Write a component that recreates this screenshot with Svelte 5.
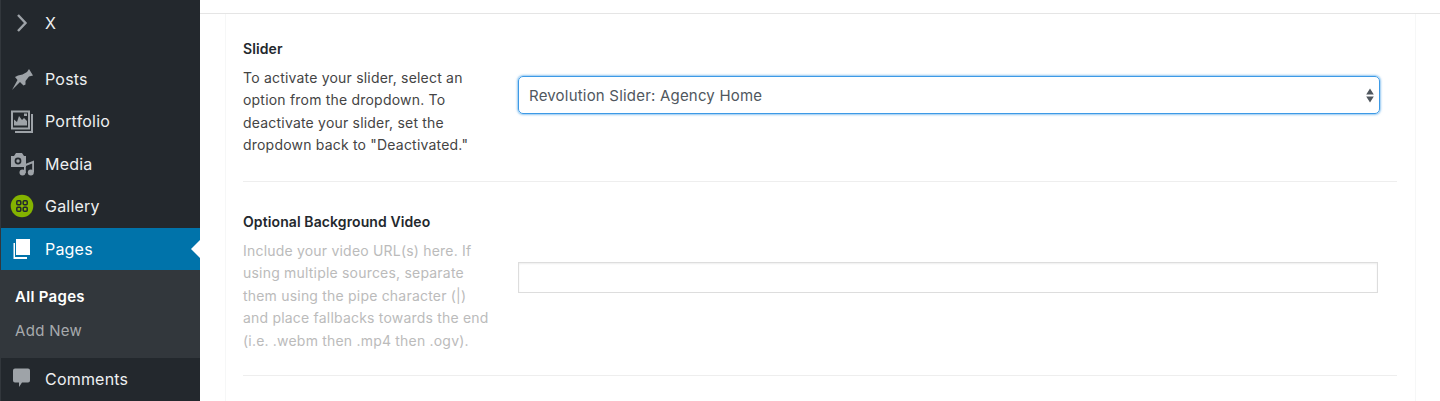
<script>
  const subs = [{ t: 'All Pages', cur: true }, { t: 'Add New', cur: false }];
</script>

<div class="page">
  <nav class="side">
    <div class="item first">
      <span class="ic"><svg width="22" height="22" viewBox="0 0 22 22"><path d="M8 3 L15.500 11 L8 19" fill="none" stroke="#9ea3a8" stroke-width="2.400"/></svg></span>
      <span class="lbl">X</span>
    </div>
    <div class="gap"></div>
    <div class="item">
      <span class="ic"><svg width="24" height="24" viewBox="0 0 24 24"><path d="M19 2 L23 8.500 L19 9.500 L15.500 14 L15.500 17.500 L13.500 18.500 L10 15 L2 23 L7.500 13 L5 10 L8 8.500 L12.500 7.500 L17 5 Z" fill="#9ea3a8"/></svg></span>
      <span class="lbl">Posts</span>
    </div>
    <div class="item">
      <span class="ic"><svg width="24" height="24" viewBox="0 0 24 24"><path d="M1 1.500h19v19H1z M3 3.500v15h15v-15z" fill="#9ea3a8" fill-rule="evenodd"/><path d="M4 16.500v-6l3 2.500 2-6 3 4 2-2 3 3v4.500z M14 4.500h3v2.500h-3z" fill="#9ea3a8"/><path d="M21 5h2v19H5v-2h16z" fill="#9ea3a8"/></svg></span>
      <span class="lbl">Portfolio</span>
    </div>
    <div class="item">
      <span class="ic"><svg width="24" height="24" viewBox="0 0 24 24"><path d="M1 4h3l2-3h6l2 3h2v11H1z" fill="#9ea3a8"/><circle cx="8" cy="9" r="3.400" fill="#23282d"/><circle cx="8" cy="9" r="1.700" fill="#9ea3a8"/><path d="M14 12.500 L24 8.500 V20 H22.200 V11.500 L15.800 14 V21 H14 Z" fill="#9ea3a8"/><circle cx="12.500" cy="20.500" r="3" fill="#9ea3a8"/><circle cx="20.800" cy="20.500" r="3" fill="#9ea3a8"/></svg></span>
      <span class="lbl">Media</span>
    </div>
    <div class="item">
      <span class="ic"><svg width="24" height="24" viewBox="0 0 24 24"><circle cx="12" cy="12" r="11.300" fill="#84b300"/><g fill="none" stroke="#23282d" stroke-width="1.500"><rect x="6.800" y="6.800" width="4" height="4" rx="1"/><rect x="13.200" y="6.800" width="4" height="4" rx="1"/><rect x="6.800" y="13.200" width="4" height="4" rx="1"/><rect x="13.200" y="13.200" width="4" height="4" rx="1"/></g></svg></span>
      <span class="lbl">Gallery</span>
    </div>
    <div class="item active">
      <span class="ic"><svg width="24" height="24" viewBox="0 0 24 24"><path d="M6 2h14v16H6z" fill="#fff"/><path d="M3.500 6h1.500v14h12v2H3.500z" fill="#fff"/></svg></span>
      <span class="lbl">Pages</span>
      <span class="notch"></span>
    </div>
    <div class="sub">
      {#each subs as s}
        <div class="subitem" class:cur={s.cur}>{s.t}</div>
      {/each}
    </div>
    <div class="item comments">
      <span class="ic"><svg width="24" height="24" viewBox="0 0 24 24"><path d="M5 1.500h13a2 2 0 0 1 2 2v10a2 2 0 0 1-2 2h-6l-3 4.500v-4.500H5a2 2 0 0 1-2-2v-10a2 2 0 0 1 2-2z" fill="#9ea3a8"/></svg></span>
      <span class="lbl">Comments</span>
    </div>
  </nav>

  <main class="main">
    <div class="panel">
      <section class="row one">
        <div class="desc">
          <h4>Slider</h4>
          <p>To activate your slider, select an option from the dropdown. To deactivate your slider, set the dropdown back to "Deactivated."</p>
        </div>
        <div class="field">
          <div class="select">
            <span>Revolution Slider: Agency Home</span>
            <svg class="arrows" width="8" height="15" viewBox="0 0 8 15"><path d="M4 0.500 L7.800 6.500 H0.200 Z M4 14.500 L0.200 8.500 H7.800 Z" fill="#50575e"/></svg>
          </div>
        </div>
      </section>
      <section class="row two">
        <div class="desc">
          <h4>Optional Background Video</h4>
          <p class="muted">Include your video URL(s) here. If using multiple sources, separate them using the pipe character (|) and place fallbacks towards the end (i.e. .webm then .mp4 then .ogv).</p>
        </div>
        <div class="field">
          <div class="input"></div>
        </div>
      </section>
    </div>
  </main>
</div>

<style>
  :global(body) { margin: 0; background: #fff; }
  .page {
    display: flex;
    width: 1440px;
    height: 401px;
    overflow: hidden;
    font-family: Inter, "Liberation Sans", sans-serif;
  }
  .side {
    width: 199px;
    flex: none;
    background: #23282d;
    border-left: 1px solid #32373c;
    display: flex;
    flex-direction: column;
    color: #eef0f1;
  }
  .item {
    position: relative;
    display: flex;
    align-items: center;
    height: 42.500px;
    flex: none;
    padding-left: 9px;
    font-size: 16px;
    line-height: 20px;
    letter-spacing: .2px;
  }
  .ic {
    width: 35px;
    display: flex;
    flex: none;
    align-items: center;
  }
  .first { height: 45px; }
  .gap { height: 12.700px; flex: none; }
  .active { background: #0073aa; color: #fff; }
  .notch {
    position: absolute;
    right: 0;
    top: 12px;
    border: 9px solid transparent;
    border-right-color: #fff;
    border-left-width: 0;
  }
  .sub {
    background: #32373c;
    height: 87.800px;
    flex: none;
    padding-top: 9.800px;
    box-sizing: border-box;
    padding-left: 14px;
    font-size: 15px;
    letter-spacing: .3px;
    color: #a7aaad;
  }
  .subitem { height: 34px; line-height: 34px; }
  .subitem.cur { color: #fff; font-weight: 600; }
  .main {
    flex: 1;
    min-width: 0;
    padding: 0 24px 0 25px;
  }
  .panel {
    margin-top: 13px;
    height: 100%;
    box-sizing: border-box;
    position: relative;
    border-left: 1px solid #f6f7f7;
    border-right: 1px solid #f6f7f7;
    padding: 0 18px 0 17px;
  }
  .panel::before {
    content: "";
    position: absolute;
    left: -26px;
    right: -25px;
    top: 0;
    height: 1px;
    background: #e5e5e5;
  }
  .row {
    display: flex;
    border-bottom: 1px solid #eeeeee;
    box-sizing: border-box;
  }
  .one { height: 169px; padding-top: 26px; }
  .two { height: 194px; padding-top: 30px; }
  .desc { width: 275px; flex: none; }
  h4 {
    margin: 0 0 8px;
    font-size: 14px;
    line-height: 20px;
    font-weight: 600;
    letter-spacing: .1px;
    color: #23282d;
  }
  p {
    margin: 0;
    width: 248px;
    font-size: 14px;
    line-height: 22.400px;
    letter-spacing: .2px;
    color: #444;
  }
  .muted { color: #bbb; }
  .field { flex: 1; min-width: 0; }
  .select {
    margin-top: 37px;
    height: 38px;
    width: 862px;
    box-sizing: border-box;
    border: 1px solid #3d9ae6;
    border-radius: 5px;
    box-shadow: 0 0 2px 1px rgba(61, 154, 230, .55);
    display: flex;
    align-items: center;
    justify-content: space-between;
    padding: 0 5px 0 10px;
    font-size: 15px;
    letter-spacing: .2px;
    color: #50575e;
  }
  .input {
    margin-top: 50px;
    width: 860px;
    height: 31px;
    box-sizing: border-box;
    border: 1px solid #ddd;
    box-shadow: inset 0 1px 2px rgba(0, 0, 0, .07);
  }
</style>
